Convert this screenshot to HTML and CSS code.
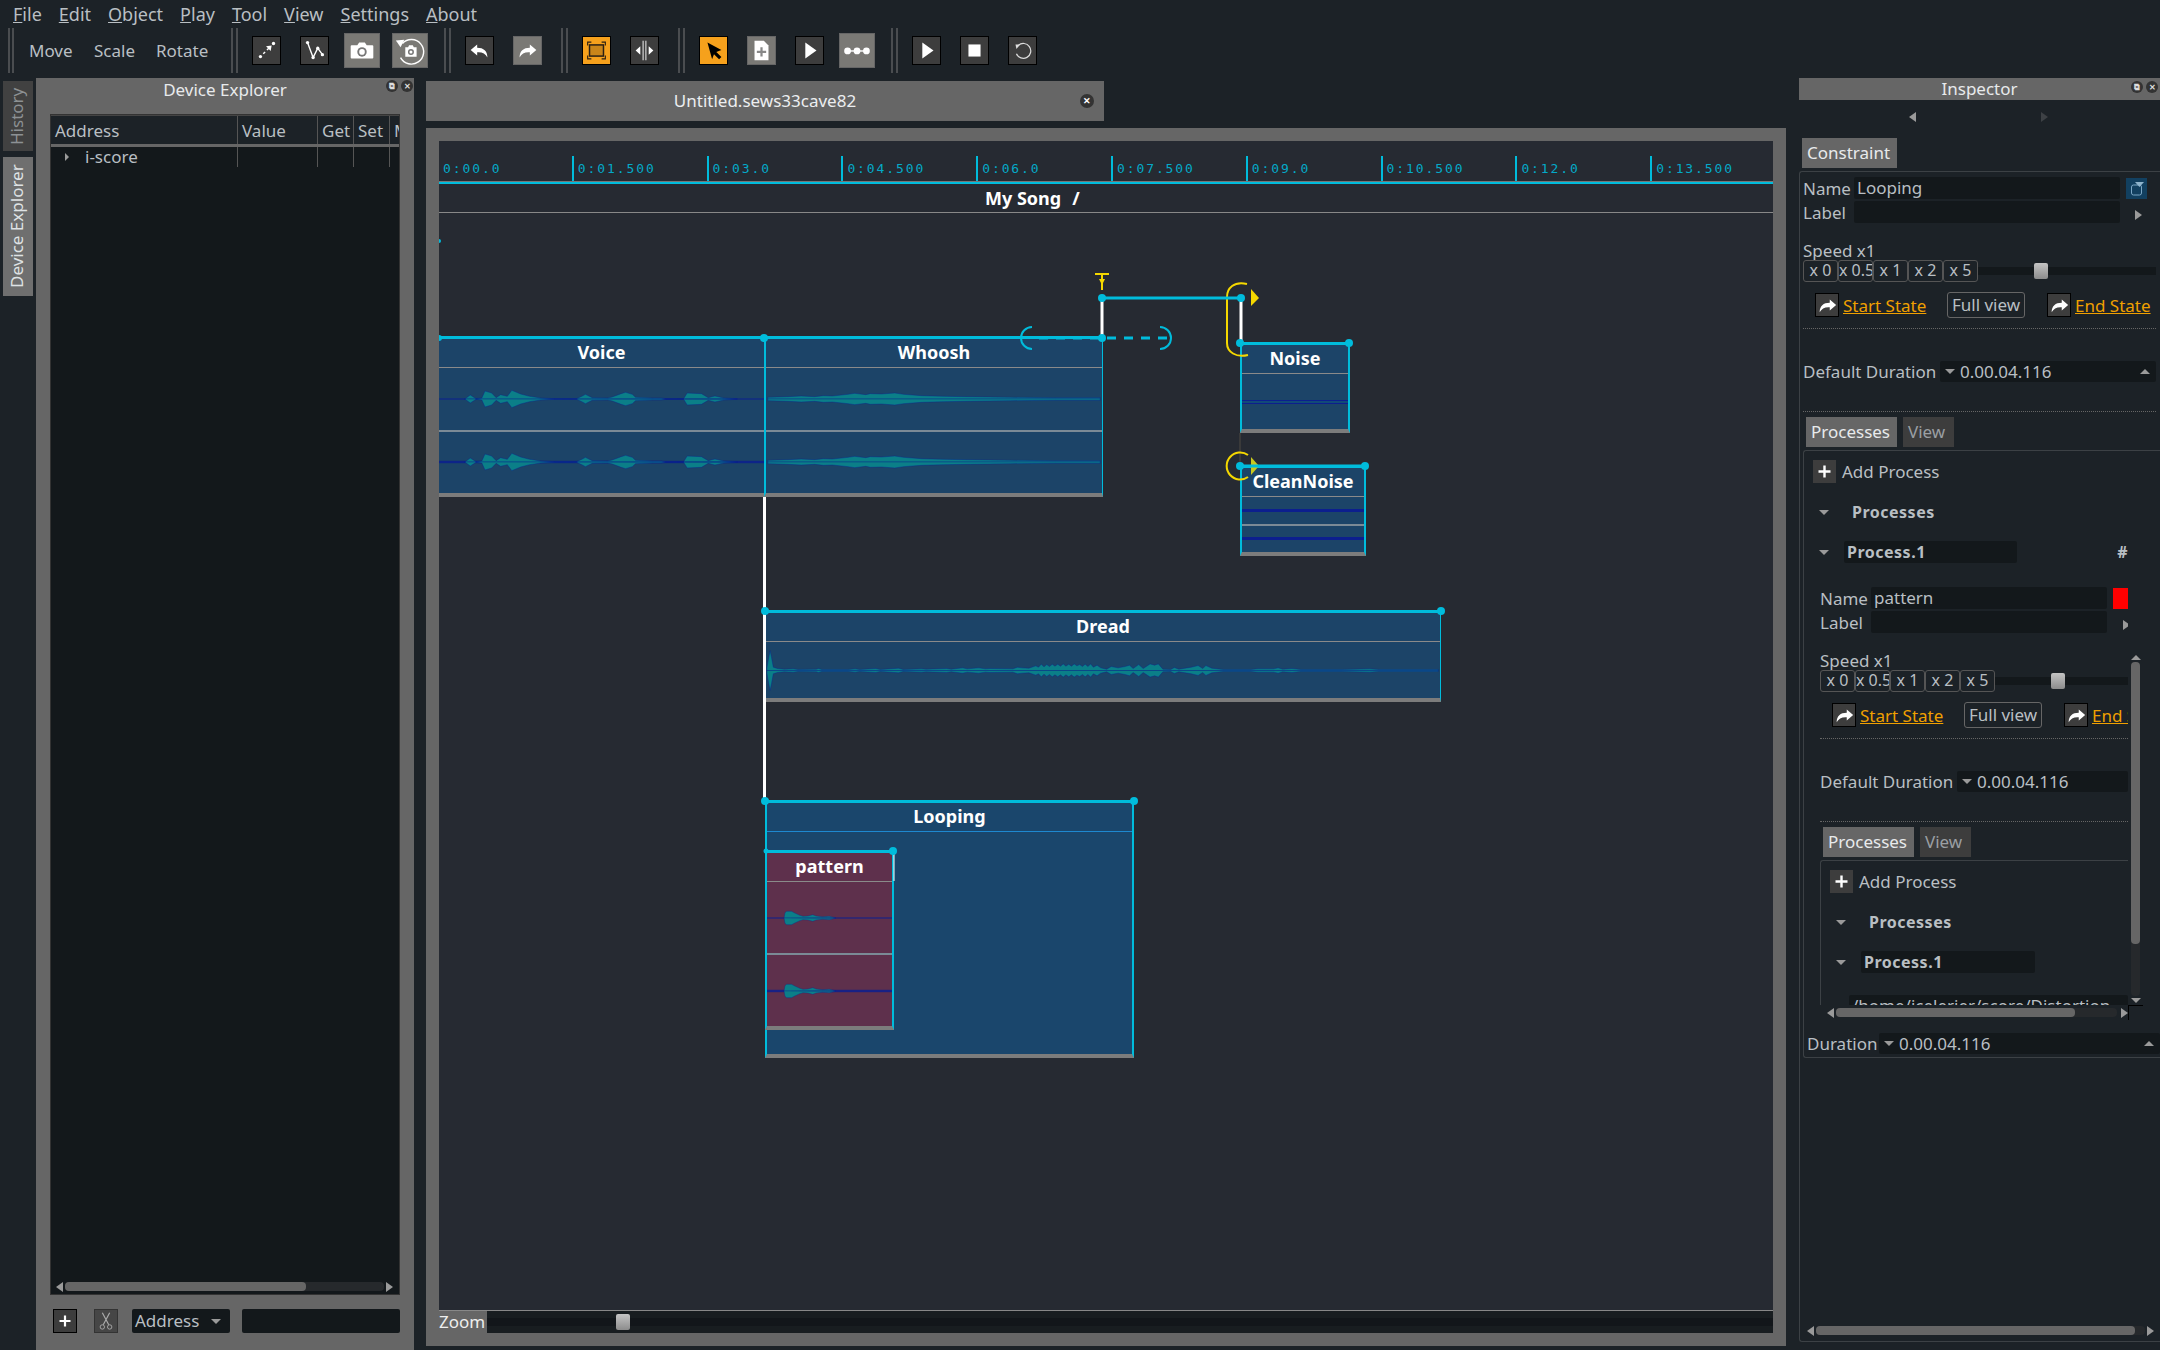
FILE: index.html
```html
<!DOCTYPE html>
<html lang="en">
<head>
    <meta charset="UTF-8">
    <title>i-score</title>
    <link rel="stylesheet" href="styles.css">
</head>
<body>
    <svg class="defs">
        <defs>
            <path id="redo" d="M17 8 L24 14 L17 20 V16.5 C12 16 8 18 6 22 C6 15 10 11.5 17 11.5 Z"/>
            <g id="wave-voice">
                <path id="wave-voice-top" d="M58 0 L70 -12 L83 -1 L96 -3 L103 -24 L118 -18 L128 -4 L138 -13 L153 -8 L163 -26 L183 -15 L203 -8 L228 -3 L258 -1 L308 -1 L320 -8 L328 -14 L343 -4 L378 -3 L388 -6 L408 -16 L418 -20 L433 -14 L440 -5 L478 -3 L498 -3 L508 -1 L548 -1 L556 -18 L588 -16 L603 -4 L618 -9 L638 -3 L668 -1 L58 0 Z"/>
                <use href="#wave-voice-top" transform="scale(1,-1)"/>
            </g>
            <g id="wave-whoosh">
                <path id="wave-whoosh-top" d="M4 -5 L49 -7 L79 -9 L109 -7 L129 -10 L149 -9 L184 -14 L199 -17 L224 -13 L234 -16 L259 -15 L289 -18 L309 -14 L349 -10 L399 -8 L449 -7 L549 -5 L649 -4 L750 -4 L750 0 L4 0 Z"/>
                <use href="#wave-whoosh-top" transform="scale(1,-1)"/>
            </g>
            <g id="wave-pattern">
                <path id="wave-pattern-top" d="M52 0 L55 -16 L60 -20 L75 -20 L85 -15 L100 -8 L110 -5 L125 -6 L140 -10 L150 -6 L170 -4 L190 -5 L210 -1 L52 0 Z"/>
                <use href="#wave-pattern-top" transform="scale(1,-1)"/>
            </g>
            <g id="wave-dread">
                <path id="wave-dread-top" d="M2 -8 L6 -40 L9 -60 L12 -40 L16 -10 L25 -6 L40 -4 L60 -5 L70 -3 L110 -4 L115 -6 L122 -3 L180 -3 L195 -5 L205 -3 L240 -6 L250 -3 L290 -7 L300 -3 L340 -5 L350 -4 L395 -6 L405 -4 L430 -8 L440 -5 L465 -8 L480 -5 L490 -6 L540 -5 L550 -10 L560 -8 L575 -7 L590 -14 L596 -10 L602 -19 L608 -11 L614 -18 L620 -12 L626 -19 L632 -13 L638 -19 L644 -13 L650 -20 L656 -13 L662 -19 L668 -13 L674 -20 L680 -14 L686 -18 L692 -12 L698 -19 L704 -12 L710 -20 L716 -10 L724 -16 L732 -8 L745 -4 L755 -12 L770 -8 L785 -12 L795 -16 L803 -6 L815 -18 L825 -6 L840 -20 L850 -16 L858 -20 L868 -4 L885 -3 L893 -9 L903 -4 L930 -10 L945 -15 L955 -6 L962 -15 L975 -7 L1000 -3 L1060 -3 L1075 -5 L1110 -5 L1120 -8 L1130 -4 L1150 -6 L1170 -3 L1260 -3 L1320 -5 L1340 -3 L1470 -3 L1470 0 L2 0 Z"/>
                <use href="#wave-dread-top" transform="scale(1,-1)"/>
            </g>
        </defs>
    </svg>

    <div class="menubar">
        <span><u>F</u>ile</span>
        <span><u>E</u>dit</span>
        <span><u>O</u>bject</span>
        <span><u>P</u>lay</span>
        <span><u>T</u>ool</span>
        <span><u>V</u>iew</span>
        <span><u>S</u>ettings</span>
        <span><u>A</u>bout</span>
    </div>

    <div class="toolbar">
        <div class="sep sep-first"></div>
        <div class="tool-text tool-move">Move</div>
        <div class="tool-text tool-scale">Scale</div>
        <div class="tool-text tool-rotate">Rotate</div>
        <div class="sep"></div>
        <div class="tool"><div class="btn"><svg viewBox="0 0 29 29"><circle cx="8" cy="21" r="1.8"/><circle cx="22" cy="7" r="1.8"/><path d="M11 18 L13 16 M15 14 L17 12" stroke="#fff" stroke-width="1.5"/><path d="M14 10 L20 9 L19 15 Z"/></svg></div></div>
        <div class="tool"><div class="btn"><svg viewBox="0 0 29 29"><polyline points="7,6 13,22 18,12 23,19" fill="none" stroke="#fff" stroke-width="1.5"/><circle cx="7" cy="6" r="1.8"/><circle cx="13" cy="22" r="1.8"/><circle cx="18" cy="12" r="1.8"/><circle cx="23" cy="19" r="1.8"/></svg></div></div>
        <div class="tool"><div class="btn btn-big"><svg viewBox="0 0 36 35"><path d="M7 12 H13 L15 9 H21 L23 12 H29 Q30 12 30 13 V25 Q30 26 29 26 H7 Q6 26 6 25 V13 Q6 12 7 12 Z"/><circle cx="18" cy="19" r="5" fill="#777"/><circle cx="18" cy="19" r="3"/></svg></div></div>
        <div class="tool"><div class="btn btn-big"><svg viewBox="0 0 36 35"><path d="M10 10 A13 13 0 1 1 8 25" fill="none" stroke="#fff" stroke-width="1.5"/><path d="M3 7 L12 6 L8 14 Z"/><path d="M13 14 H16 L17 12 H21 L22 14 H25 V24 H13 Z"/><circle cx="19" cy="19" r="3.2" fill="#777"/><circle cx="19" cy="19" r="1.6"/></svg></div></div>
        <div class="sep"></div>
        <div class="tool"><div class="btn"><svg viewBox="0 0 29 29"><use href="#redo" transform="matrix(-1 0 0 1 29 0)"/></svg></div></div>
        <div class="tool"><div class="btn btn-on"><svg viewBox="0 0 29 29"><use href="#redo"/></svg></div></div>
        <div class="sep"></div>
        <div class="tool"><div class="btn btn-orange"><svg viewBox="0 0 29 29"><rect x="7" y="8.5" width="15" height="12" fill="#c9851a" stroke="#2a2015" stroke-width="1.6"/><path d="M5 9 V5.5 H9 M20 5.5 H24 V9 M24 20 V23.5 H20 M9 23.5 H5 V20" fill="none" stroke="#2a2015" stroke-width="1.2"/></svg></div></div>
        <div class="tool"><div class="btn"><svg viewBox="0 0 29 29"><path d="M5 14.5 L10 10 V19 Z M24 14.5 L19 10 V19 Z"/><path d="M13 4 V25 M16 4 V25" stroke="#fff" stroke-width="1"/></svg></div></div>
        <div class="sep"></div>
        <div class="tool"><div class="btn btn-orange"><svg viewBox="0 0 29 29"><path d="M8 6 L23 14 L17.5 16 L23 21.5 L20.5 24 L15 18.5 L13 24 Z" fill="#000"/></svg></div></div>
        <div class="tool"><div class="btn btn-on"><svg viewBox="0 0 29 29"><path d="M7 4 H17 L22 9 V25 H7 Z"/><path d="M14.5 11 V21 M9.5 16 H19.5" stroke="#888" stroke-width="2.4"/></svg></div></div>
        <div class="tool"><div class="btn"><svg viewBox="0 0 29 29"><path d="M10 6 L22 14.5 L10 23 Z"/></svg></div></div>
        <div class="tool"><div class="btn btn-big"><svg viewBox="0 0 36 35"><path d="M6 18 H30" stroke="#fff" stroke-width="1.5"/><circle cx="8" cy="18" r="3.6"/><circle cx="18" cy="18" r="3.6"/><circle cx="28" cy="18" r="3.6"/></svg></div></div>
        <div class="sep"></div>
        <div class="tool"><div class="btn"><svg viewBox="0 0 29 29"><path d="M10 6 L22 14.5 L10 23 Z"/></svg></div></div>
        <div class="tool"><div class="btn"><svg viewBox="0 0 29 29"><rect x="8" y="8" width="13" height="13"/></svg></div></div>
        <div class="tool"><div class="btn"><svg viewBox="0 0 29 29"><path d="M10 9 A8 8 0 1 1 8 18" fill="none" stroke="#ddd" stroke-width="1.3"/><path d="M7 8 L12 8 L8 13 Z" fill="#ddd"/></svg></div></div>
    </div>

    <div class="main">
        <div class="dock-tabs">
            <div class="dock-tab">History</div>
            <div class="dock-tab dock-tab-on">Device Explorer</div>
        </div>

        <div class="device-panel">
            <div class="panel-title">Device Explorer
                <div class="win-btns"><span class="win-btn">&#10697;</span><span class="win-btn">&#10005;</span></div>
            </div>
            <div class="tree">
                <div class="tree-head">
                    <span class="col col-address">Address</span>
                    <span class="col col-value">Value</span>
                    <span class="col col-get">Get</span>
                    <span class="col col-set">Set</span>
                    <span class="col col-more">M</span>
                </div>
                <div class="tree-row">
                    <span class="col col-address"><i class="tri tri-right tri-small"></i>i-score</span>
                    <span class="col col-value"></span>
                    <span class="col col-get"></span>
                    <span class="col col-set"></span>
                </div>
                <div class="tree-fill"></div>
                <div class="hscroll hscroll-tree">
                    <i class="tri tri-left"></i>
                    <div class="hscroll-track"><div class="hscroll-thumb"></div></div>
                    <i class="tri tri-right"></i>
                </div>
            </div>
            <div class="device-bar">
                <div class="btn btn-device"><svg viewBox="0 0 24 24"><path d="M12 6 V18 M6 12 H18" stroke="#fff" stroke-width="2.4"/></svg></div>
                <div class="btn btn-device btn-cut"><svg viewBox="0 0 24 24"><path d="M8 3 L15 16 M16 3 L9 16" stroke="#aaa" stroke-width="1.3"/><circle cx="8" cy="18.5" r="2.4" fill="none" stroke="#aaa"/><circle cx="16" cy="18.5" r="2.4" fill="none" stroke="#aaa"/></svg></div>
                <div class="combo">Address<i class="tri tri-down"></i></div>
                <div class="field device-search"></div>
            </div>
        </div>

        <div class="center">
            <div class="doc-tab">Untitled.sews33cave82<span class="doc-close">&#10005;</span></div>
            <div class="canvas-wrap">
                <div class="canvas">
                    <div class="ruler">
                        <div class="tick">0:00.0</div>
                        <div class="tick">0:01.500</div>
                        <div class="tick">0:03.0</div>
                        <div class="tick">0:04.500</div>
                        <div class="tick">0:06.0</div>
                        <div class="tick">0:07.500</div>
                        <div class="tick">0:09.0</div>
                        <div class="tick">0:10.500</div>
                        <div class="tick">0:12.0</div>
                        <div class="tick">0:13.500</div>
                    </div>
                    <div class="song-title"><span>My Song</span><span>/</span></div>
                    <div class="scene">
                        <div class="box box-voice">
                            <div class="box-title">Voice</div>
                            <div class="slot"><svg class="wave" viewBox="0 -48 728 96" preserveAspectRatio="none"><line x1="0" y1="0" x2="728" y2="0"/><use href="#wave-voice"/></svg></div>
                            <div class="slot"><svg class="wave" viewBox="0 -48 728 96" preserveAspectRatio="none"><line x1="0" y1="-2" x2="728" y2="-2"/><line x1="0" y1="2" x2="728" y2="2"/><use href="#wave-voice"/></svg></div>
                        </div>
                        <div class="box box-whoosh">
                            <div class="box-title">Whoosh</div>
                            <div class="slot"><svg class="wave" viewBox="0 -48 754 96" preserveAspectRatio="none"><use href="#wave-whoosh"/></svg></div>
                            <div class="slot"><svg class="wave" viewBox="0 -48 754 96" preserveAspectRatio="none"><use href="#wave-whoosh"/></svg></div>
                        </div>
                        <div class="box box-noise">
                            <div class="box-title">Noise</div>
                            <div class="slot"><div class="flat-wave flat-wave-double"></div></div>
                        </div>
                        <div class="box box-clean">
                            <div class="box-title">CleanNoise</div>
                            <div class="slot"><div class="flat-wave"></div></div>
                            <div class="slot"><div class="flat-wave"></div></div>
                        </div>
                        <div class="box box-dread">
                            <div class="box-title">Dread</div>
                            <div class="slot"><svg class="wave wave-tall" viewBox="0 -68 1474 136" preserveAspectRatio="none"><use href="#wave-dread"/></svg></div>
                        </div>
                        <div class="box box-looping">
                            <div class="box-title box-title-blue">Looping</div>
                            <div class="box box-pattern">
                                <div class="box-title">pattern</div>
                                <div class="slot"><svg class="wave wave-short" viewBox="0 -30 382 60" preserveAspectRatio="none"><line x1="0" y1="0" x2="382" y2="0"/><use href="#wave-pattern"/></svg></div>
                                <div class="slot"><svg class="wave wave-short" viewBox="0 -30 382 60" preserveAspectRatio="none"><line x1="0" y1="-2" x2="382" y2="-2"/><line x1="0" y1="2" x2="382" y2="2"/><use href="#wave-pattern"/></svg></div>
                            </div>
                        </div>
                        <svg class="links" viewBox="440 213 1333 1097">
                            <g class="link-white">
                                <line x1="1103" y1="298" x2="1103" y2="338"/>
                                <line x1="1242" y1="298" x2="1242" y2="343"/>
                                <line x1="765.5" y1="497" x2="765.5" y2="801"/>
                                <line x1="895" y1="851" x2="895" y2="881" class="link-thin"/>
                            </g>
                            <line class="link-dim" x1="1241" y1="433" x2="1241" y2="466"/>
                            <g class="link-yellow">
                                <path d="M1096 274 H1110 M1103 274 V290"/>
                                <path d="M1248 284 C1235 281 1228 288 1228 297 V343 C1228 352 1237 358 1249 355"/>
                                <path d="M1249 455 A13.5 13.5 0 1 0 1249 477"/>
                            </g>
                            <path class="link-fill" d="M1100 279 H1106 L1103 285 Z"/>
                            <path class="link-fill" d="M1252 289 L1260 298 L1252 306 Z"/>
                            <path class="link-fill link-fill-dim" d="M1252 457 L1260 466 L1252 475 Z"/>
                            <g class="link-cyan">
                                <line x1="1103" y1="298" x2="1242" y2="298"/>
                                <line x1="1241" y1="466" x2="1366" y2="466"/>
                                <line x1="1040" y1="338" x2="1172" y2="338" class="link-dash"/>
                                <path d="M1033 327 A11 11 0 0 0 1033 349" class="link-arc"/>
                                <path d="M1161 327 A11 11 0 0 1 1161 349" class="link-arc"/>
                            </g>
                            <g class="link-nodes">
                                <circle cx="440" cy="241" r="2"/>
                                <circle cx="440" cy="338" r="3"/>
                                <circle cx="765" cy="338" r="4"/>
                                <circle cx="1103" cy="298" r="4"/>
                                <circle cx="1103" cy="338" r="4"/>
                                <circle cx="1242" cy="298" r="4"/>
                                <circle cx="1241" cy="343" r="4"/>
                                <circle cx="1350" cy="343" r="4"/>
                                <circle cx="1241" cy="466" r="4"/>
                                <circle cx="1366" cy="466" r="4"/>
                                <circle cx="766" cy="611" r="4"/>
                                <circle cx="1442" cy="611" r="4"/>
                                <circle cx="766" cy="801" r="4"/>
                                <circle cx="1135" cy="801" r="4"/>
                                <circle cx="767" cy="851" r="2.5"/>
                                <circle cx="894" cy="851" r="4"/>
                            </g>
                        </svg>
                    </div>
                    <div class="zoom-bar">
                        <span class="zoom-label">Zoom</span>
                        <div class="zoom-slider"><div class="zoom-groove"></div><div class="thumb zoom-thumb"></div></div>
                    </div>
                </div>
            </div>
        </div>

        <div class="inspector">
            <div class="inspector-title">Inspector
                <div class="win-btns"><span class="win-btn">&#10697;</span><span class="win-btn">&#10005;</span></div>
            </div>
            <div class="tab-arrows"><i class="tri tri-left"></i><i class="tri tri-right tri-dim"></i></div>
            <div class="tabs"><div class="tab tab-on tab-constraint">Constraint</div></div>
            <div class="inspector-box">
                <div class="block">
                    <div class="meta-row"><span class="meta-label">Name</span><div class="field name-field">Looping</div><div class="color-btn color-blue"><svg viewBox="0 0 21 21"><rect x="5.5" y="7" width="10" height="10" rx="2" fill="none" stroke="#7aa6c4"/><path d="M9 4 H18 L13.5 9 Z" fill="#8fb4cc"/></svg></div></div>
                    <div class="meta-row"><span class="meta-label">Label</span><div class="field name-field"></div><i class="tri tri-right meta-arrow"></i></div>
                    <div class="speed-label">Speed x1</div>
                    <div class="speed-row">
                        <div class="speed-btn">x 0</div><div class="speed-btn">x 0.5</div><div class="speed-btn">x 1</div><div class="speed-btn">x 2</div><div class="speed-btn">x 5</div>
                        <div class="groove"><div class="thumb speed-thumb"></div></div>
                    </div>
                    <div class="state-row">
                        <div class="btn btn-state"><svg viewBox="0 0 24 24"><use href="#redo" transform="translate(-2,-2)"/></svg></div>
                        <a class="state-link">Start State</a>
                        <div class="full-view">Full view</div>
                        <div class="btn btn-state btn-end"><svg viewBox="0 0 24 24"><use href="#redo" transform="translate(-2,-2)"/></svg></div>
                        <a class="state-link">End State</a>
                    </div>
                    <div class="dotted"></div>
                    <div class="duration-row"><span>Default Duration</span><div class="spin"><i class="tri tri-down"></i>0.00.04.116<i class="tri tri-up spin-up"></i></div></div>
                    <div class="dotted dotted-low"></div>
                    <div class="tabs tabs-inner"><div class="tab tab-on">Processes</div><div class="tab">View</div></div>
                </div>

                <div class="sub-box">
                    <div class="scroll-area">
                        <div class="scroll-content">
                            <div class="add-row"><div class="add-btn"><svg viewBox="0 0 23 23"><path d="M11.5 5.5 V17.5 M5.5 11.5 H17.5" stroke="#fff" stroke-width="2.4"/></svg></div>Add Process</div>
                            <div class="section-row"><i class="tri tri-down"></i><b>Processes</b></div>
                            <div class="process-row"><i class="tri tri-down"></i><div class="field process-field"><b>Process.1</b></div><b class="hash">#</b></div>

                            <div class="block block-nested">
                                <div class="meta-row"><span class="meta-label">Name</span><div class="field name-field-nested">pattern</div><div class="color-btn color-red"></div></div>
                                <div class="meta-row"><span class="meta-label">Label</span><div class="field name-field-nested"></div><i class="tri tri-right meta-arrow meta-arrow-nested"></i></div>
                                <div class="speed-label">Speed x1</div>
                                <div class="speed-row">
                                    <div class="speed-btn">x 0</div><div class="speed-btn">x 0.5</div><div class="speed-btn">x 1</div><div class="speed-btn">x 2</div><div class="speed-btn">x 5</div>
                                    <div class="groove"><div class="thumb speed-thumb"></div></div>
                                </div>
                                <div class="state-row">
                                    <div class="btn btn-state"><svg viewBox="0 0 24 24"><use href="#redo" transform="translate(-2,-2)"/></svg></div>
                                    <a class="state-link">Start State</a>
                                    <div class="full-view">Full view</div>
                                    <div class="btn btn-state btn-end"><svg viewBox="0 0 24 24"><use href="#redo" transform="translate(-2,-2)"/></svg></div>
                                    <a class="state-link">End State</a>
                                </div>
                                <div class="dotted"></div>
                                <div class="duration-row"><span>Default Duration</span><div class="spin"><i class="tri tri-down"></i>0.00.04.116</div></div>
                                <div class="dotted dotted-low"></div>
                                <div class="tabs tabs-inner"><div class="tab tab-on">Processes</div><div class="tab">View</div></div>
                            </div>

                            <div class="sub-box sub-box-nested">
                                <div class="add-row"><div class="add-btn"><svg viewBox="0 0 23 23"><path d="M11.5 5.5 V17.5 M5.5 11.5 H17.5" stroke="#fff" stroke-width="2.4"/></svg></div>Add Process</div>
                                <div class="section-row"><i class="tri tri-down"></i><b>Processes</b></div>
                                <div class="process-row"><i class="tri tri-down"></i><div class="field process-field"><b>Process.1</b></div></div>
                                <div class="field path-field">/home/jcelerier/score/Distortion</div>
                            </div>
                        </div>
                        <div class="vscroll">
                            <i class="tri tri-up"></i>
                            <div class="vscroll-track"><div class="vscroll-thumb"></div></div>
                            <i class="tri tri-down"></i>
                        </div>
                    </div>
                    <div class="hscroll hscroll-inner">
                        <i class="tri tri-left"></i>
                        <div class="hscroll-track"><div class="hscroll-thumb"></div></div>
                        <i class="tri tri-right"></i>
                        <div class="scroll-corner"></div>
                    </div>
                    <div class="duration-row duration-row-last"><span>Duration</span><div class="spin"><i class="tri tri-down"></i>0.00.04.116<i class="tri tri-up spin-up"></i></div></div>
                </div>

                <div class="hscroll hscroll-outer">
                    <i class="tri tri-left"></i>
                    <div class="hscroll-track"><div class="hscroll-thumb"></div></div>
                    <i class="tri tri-right"></i>
                </div>
            </div>
        </div>
    </div>
</body>
</html>
```
FILE: styles.css
```css
* {
    box-sizing: border-box;
}
body {
    margin: 0;
    width: 2160px;
    height: 1350px;
    overflow: hidden;
    background-color: #1c2227;
    color: #b9bfc3;
    font-family: "Noto Sans", sans-serif;
    font-size: 17px;
}
svg {
    display: block;
    fill: #fff;
}
i {
    display: block;
}
.defs {
    position: absolute;
    width: 0;
    height: 0;
}

/* menu and toolbar */
.menubar {
    height: 28px;
    padding: 1px 0 0 13px;
    display: flex;
    gap: 17px;
    font-size: 18px;
    line-height: 26px;
}
.toolbar {
    height: 45px;
    margin-bottom: 5px;
    display: flex;
    align-items: center;
}
.sep {
    width: 7px;
    height: 45px;
    margin: 0 4px 0 10px;
    border-left: 2px solid #4a4d50;
    border-right: 2px solid #4a4d50;
}
.sep-first {
    margin-left: 8px;
    margin-right: 15px;
    width: 6px;
}
.tool-text {
    font-size: 17px;
}
.tool-move {
    width: 65px;
}
.tool-scale {
    width: 62px;
}
.tool-rotate {
    width: 65px;
}
.tool {
    width: 48px;
    display: flex;
    justify-content: center;
}
.btn {
    width: 29px;
    height: 29px;
    background-color: #3d3d3d;
    border: 1px solid #000;
    flex: none;
}
.btn svg {
    width: 100%;
    height: 100%;
}
.btn-big {
    width: 36px;
    height: 35px;
    background-color: #7a7975;
    border-color: #666;
}
.btn-on {
    background-color: #7a7975;
    border-color: #666;
}
.btn-orange {
    background-color: #f6a11c;
}

/* docks */
.main {
    height: 1272px;
    display: flex;
}
.dock-tabs {
    width: 36px;
    padding: 3px 3px 0 3px;
    display: flex;
    flex-direction: column;
    gap: 6px;
}
.dock-tab {
    height: 70px;
    background-color: #414141;
    color: #8d9194;
    writing-mode: vertical-rl;
    transform: rotate(180deg);
    text-align: center;
    line-height: 28px;
    white-space: nowrap;
}
.dock-tab-on {
    height: 139px;
    background-color: #6f6f6f;
    color: #dfe2e4;
}
.device-panel {
    width: 378px;
    background-color: #666;
    padding: 0 14px;
    display: flex;
    flex-direction: column;
}
.panel-title {
    position: relative;
    height: 36px;
    text-align: center;
    line-height: 24px;
    color: #e8eaec;
}
.win-btns {
    position: absolute;
    right: 1px;
    top: 2px;
    display: flex;
    gap: 3px;
}
.panel-title .win-btns {
    right: -13px;
}
.win-btn {
    width: 12px;
    height: 12px;
    border-radius: 50%;
    background-color: #333;
    color: #ddd;
    font-size: 8px;
    line-height: 12px;
    text-align: center;
    font-weight: bold;
}
.tree {
    flex: 1;
    background-color: #13181b;
    border: 1px solid #333;
    display: flex;
    flex-direction: column;
    overflow: hidden;
}
.tree-head {
    height: 32px;
    background-color: #1c2227;
    border-bottom: 3px solid #666;
    display: flex;
    line-height: 30px;
    border-top: 1px solid #444;
}
.tree-row {
    height: 20px;
    display: flex;
    line-height: 20px;
}
.col {
    display: block;
    overflow: hidden;
    border-right: 1px solid #555;
    padding-left: 4px;
    white-space: nowrap;
}
.col-address {
    width: 187px;
}
.col-value {
    width: 80px;
}
.col-get {
    width: 36px;
}
.col-set {
    width: 36px;
}
.col-more {
    width: 9px;
    border-right: none;
}
.tree-row .col-address {
    position: relative;
    padding-left: 34px;
}
.tree-row .tri {
    position: absolute;
    left: 14px;
    top: 6px;
}
.tree-fill {
    flex: 1;
}
.device-bar {
    height: 55px;
    padding: 14px 0 0 3px;
    display: flex;
    align-items: flex-start;
}
.btn-device {
    width: 24px;
    height: 24px;
    margin-right: 17px;
}
.btn-cut {
    background-color: #464646;
    border-color: #333;
    margin-right: 14px;
}
.combo {
    width: 98px;
    height: 24px;
    background-color: #13181b;
    border-radius: 2px;
    padding-left: 3px;
    line-height: 24px;
    display: flex;
    align-items: center;
    gap: 12px;
}
.device-search {
    width: 158px;
    height: 24px;
    margin-left: 12px;
}
.field {
    background-color: #13181b;
    border-radius: 2px;
    line-height: 22px;
    padding-left: 3px;
    overflow: hidden;
    white-space: nowrap;
}

/* triangles */
.tri {
    width: 0;
    height: 0;
    flex: none;
    border-style: solid;
    border-color: transparent;
}
.tri-left {
    border-width: 5px 7px 5px 0;
    border-right-color: #9a9a9a;
}
.tri-right {
    border-width: 5px 0 5px 7px;
    border-left-color: #9a9a9a;
}
.tri-small {
    border-width: 4px 0 4px 4px;
}
.tri-dim {
    border-left-color: #3d4145;
}
.tri-down {
    border-width: 5px 5px 0 5px;
    border-top-color: #9a9a9a;
}
.tri-up {
    border-width: 0 5px 5px 5px;
    border-bottom-color: #9a9a9a;
}

/* scrollbars */
.hscroll {
    height: 9px;
    display: flex;
    align-items: center;
    gap: 2px;
}
.hscroll-track {
    flex: 1;
    height: 9px;
    background-color: #26292c;
    border-radius: 4px;
}
.hscroll-thumb {
    height: 9px;
    background-color: #666;
    border-radius: 4px;
}
.hscroll-tree {
    margin: 0 6px 3px 5px;
}
.hscroll-tree .hscroll-thumb {
    width: 241px;
}
.hscroll-inner {
    position: relative;
    height: 28px;
    padding: 3px 0 0 23px;
    width: 324px;
    align-items: flex-start;
}
.hscroll-inner .tri {
    margin-top: 0;
}
.hscroll-inner .hscroll-thumb {
    width: 239px;
}
.hscroll-inner .hscroll-track {
    margin-right: 2px;
    flex: 1;
}
.scroll-corner {
    position: absolute;
    left: 324px;
    top: 0;
    width: 15px;
    height: 15px;
    border-left: 1px solid #000;
    border-top: 1px solid #000;
}
.hscroll-outer {
    margin: auto 6px 6px 7px;
}
.hscroll-outer .hscroll-thumb {
    width: 319px;
}

/* center */
.center {
    width: 1360px;
    margin: 0 13px 0 12px;
    display: flex;
    flex-direction: column;
}
.doc-tab {
    position: relative;
    width: 678px;
    height: 40px;
    margin-top: 3px;
    background-color: #666;
    color: #eceef0;
    text-align: center;
    line-height: 40px;
    flex: none;
}
.doc-close {
    position: absolute;
    right: 10px;
    top: 13px;
    width: 14px;
    height: 14px;
    border-radius: 50%;
    background-color: #333;
    color: #fff;
    font-size: 9px;
    line-height: 14px;
    font-weight: bold;
}
.canvas-wrap {
    height: 1218px;
    margin-top: 7px;
    background-color: #666;
    padding: 13px;
}
.canvas {
    height: 100%;
    background-color: #262a32;
    display: flex;
    flex-direction: column;
    overflow: hidden;
}
.ruler {
    height: 43px;
    flex: none;
    padding-top: 15px;
    margin-left: -2px;
    display: flex;
    border-bottom: 2px solid #00bcdc;
    box-shadow: inset 0 -1px 0 #777;
}
.tick {
    width: 134.8px;
    height: 25px;
    flex: none;
    border-left: 2px solid #00bcdc;
    padding: 4px 0 0 4px;
    color: #04a9c8;
    font-family: "DejaVu Sans Mono", monospace;
    font-size: 13px;
    letter-spacing: 1.9px;
    line-height: 18px;
    white-space: nowrap;
}
.song-title {
    height: 29px;
    flex: none;
    padding-left: 546px;
    display: flex;
    gap: 11px;
    color: #fff;
    font-weight: bold;
    font-size: 18px;
    line-height: 28px;
    border-bottom: 1px solid #888;
}
.scene {
    position: relative;
    flex: 1;
}
.zoom-bar {
    height: 23px;
    flex: none;
    border-top: 1px solid #888;
    display: flex;
    background-color: #666;
    color: #eee;
    line-height: 22px;
}
.zoom-label {
    width: 48px;
    overflow: hidden;
}
.zoom-slider {
    position: relative;
    flex: 1;
    background-color: #181d20;
}
.zoom-groove {
    height: 8px;
    margin-top: 7px;
    background-color: #12161a;
}
.zoom-thumb {
    position: absolute;
    left: 129px;
    top: 3px;
}
.thumb {
    width: 14px;
    height: 16px;
    border-radius: 2px;
    background: linear-gradient(#c4c4c4, #8c8c8c);
}

/* boxes on the scenario */
.box {
    position: absolute;
    display: flex;
    flex-direction: column;
    background-color: #1c4468;
    border-top: 3px solid #00bcdc;
    border-left: 2px solid #00bcdc;
    border-right: 2px solid #00bcdc;
    border-bottom: 4px solid #7c7c7c;
}
.box-title {
    height: 29px;
    flex: none;
    text-align: center;
    color: #fff;
    font-weight: bold;
    font-size: 18px;
    line-height: 27px;
    border-bottom: 1px solid #8a8a8a;
}
.box-title-blue {
    border-bottom-color: #1e88d0;
}
.slot {
    flex: 1;
    min-height: 0;
    display: flex;
    align-items: center;
    border-top: 2px solid #7b8a96;
}
.box-title + .slot {
    border-top: none;
}
.wave {
    width: 100%;
    height: 32px;
    overflow: visible;
    fill: #0b7f88;
    stroke: #0b1f90;
}
.wave * {
    vector-effect: non-scaling-stroke;
}
.wave-tall {
    height: 45px;
}
.wave-short {
    height: 20px;
}
.flat-wave {
    width: 100%;
    height: 3px;
    background-color: #0c1f8e;
}
.flat-wave-double {
    height: 4px;
    background-color: #124a78;
    border-top: 1px solid #0c1f8e;
    border-bottom: 1px solid #0c1f8e;
}
.box-voice {
    left: 0;
    top: 123px;
    width: 325px;
    height: 161px;
    border-left: none;
    border-right: none;
}
.box-whoosh {
    left: 325px;
    top: 123px;
    width: 339px;
    height: 161px;
    border-right-width: 1px;
}
.box-noise {
    left: 801px;
    top: 129px;
    width: 110px;
    height: 91px;
}
.box-clean {
    left: 801px;
    top: 252px;
    width: 126px;
    height: 91px;
}
.box-dread {
    left: 326px;
    top: 397px;
    width: 676px;
    height: 92px;
    border-left-width: 1px;
    border-right-width: 1px;
}
.box-looping {
    left: 326px;
    top: 587px;
    width: 369px;
    height: 258px;
    background-color: #1a466c;
}
.box-pattern {
    left: -2px;
    top: 47px;
    width: 129px;
    height: 180px;
    background-color: #5e304c;
}

.links {
    position: absolute;
    left: 0;
    top: 0;
    width: 1333px;
    height: 1097px;
    fill: none;
}
.link-white line {
    stroke: #fff;
    stroke-width: 3;
}
.link-white .link-thin {
    stroke-width: 1;
}
.link-dim {
    stroke: #3a3a3a;
    stroke-width: 2;
}
.link-yellow path {
    stroke: #f5d800;
    stroke-width: 2;
    fill: none;
}
.link-fill {
    fill: #f5d800;
}
.link-fill-dim {
    fill: #c8c820;
}
.link-cyan line {
    stroke: #00bcdc;
    stroke-width: 3;
}
.link-cyan .link-dash {
    stroke-dasharray: 9 8;
}
.link-cyan .link-arc {
    stroke: #00bcdc;
    stroke-width: 2;
    fill: none;
}
.link-nodes {
    fill: #00bcdc;
}

/* inspector */
.inspector {
    width: 361px;
    display: flex;
    flex-direction: column;
}
.inspector-title {
    position: relative;
    height: 22px;
    flex: none;
    background-color: #666;
    text-align: center;
    line-height: 22px;
    color: #e8eaec;
}
.inspector-title .win-btns {
    right: 2px;
    top: 3px;
}
.inspector-title .win-btn {
    line-height: 12px;
}
.tab-arrows {
    height: 38px;
    flex: none;
    padding: 12px 0 0 110px;
    display: flex;
    gap: 125px;
}
.tabs {
    display: flex;
    gap: 6px;
    flex: none;
}
.tab {
    height: 30px;
    padding: 0 5px;
    background-color: #3d3d3d;
    color: #9a9fa3;
    line-height: 29px;
}
.tab-on {
    background-color: #666;
    color: #e8eaec;
}
.tab-constraint {
    width: 95px;
    margin-left: 3px;
}
.tabs-inner {
    margin: 5px 0 0 3px;
}
.tabs-inner .tab:first-child {
    width: 91px;
}
.tabs-inner .tab:last-child {
    width: 51px;
}
.inspector-box {
    flex: none;
    height: 1171px;
    margin-top: 3px;
    border: 1px solid #3c4145;
    border-right: none;
    border-radius: 3px 0 0 3px;
    padding-top: 5px;
    display: flex;
    flex-direction: column;
}
.block {
    padding: 0 4px 0 3px;
    flex: none;
}
.block-nested {
    padding: 0;
    margin: 24px 0 0 16px;
    width: 308px;
    overflow: hidden;
}
.meta-row {
    height: 22px;
    margin-bottom: 2px;
    display: flex;
    align-items: center;
}
.meta-label {
    width: 51px;
    flex: none;
}
.name-field {
    width: 266px;
    height: 22px;
    flex: none;
}
.name-field-nested {
    width: 236px;
    height: 22px;
    flex: none;
}
.color-btn {
    width: 21px;
    height: 21px;
    margin-left: 6px;
    flex: none;
}
.color-blue {
    background-color: #124060;
}
.color-red {
    background-color: #f00;
}
.meta-arrow {
    margin: 6px 0 0 15px;
}
.meta-arrow-nested {
    margin-left: 16px;
}
.speed-label {
    margin-top: 20px;
    height: 17px;
    line-height: 16px;
}
.speed-row {
    height: 22px;
    display: flex;
    align-items: center;
}
.speed-btn {
    width: 35px;
    height: 22px;
    flex: none;
    border: 1px solid #555;
    border-radius: 3px;
    text-align: center;
    font-size: 16px;
    line-height: 19px;
    white-space: nowrap;
    overflow: hidden;
}
.groove {
    position: relative;
    flex: 1;
    height: 8px;
    background-color: #13181b;
}
.speed-thumb {
    position: absolute;
    left: 56px;
    top: -4px;
}
.state-row {
    height: 26px;
    margin-top: 10px;
    padding-left: 12px;
    display: flex;
    align-items: center;
    white-space: nowrap;
}
.btn-state {
    width: 24px;
    height: 24px;
}
.btn-end {
    margin-left: 22px;
}
.state-link {
    width: 87px;
    flex: none;
    margin-left: 4px;
    color: #f0a000;
    text-decoration: underline;
}
.state-link:last-child {
    width: auto;
}
.full-view {
    width: 78px;
    height: 26px;
    margin-left: 17px;
    flex: none;
    border: 1px solid #666;
    border-radius: 3px;
    text-align: center;
    line-height: 23px;
}
.dotted {
    margin-top: 10px;
    border-top: 1px dotted #666;
}
.dotted-low {
    margin-top: 29px;
}
.duration-row {
    margin-top: 32px;
    height: 21px;
    display: flex;
    align-items: center;
    white-space: nowrap;
}
.duration-row span {
    width: 137px;
    flex: none;
}
.spin {
    flex: 1;
    height: 21px;
    background-color: #13181b;
    border-radius: 2px;
    display: flex;
    align-items: center;
    gap: 5px;
    padding: 0 6px 0 5px;
}
.spin-up {
    margin-left: auto;
}
.sub-box {
    margin: 3px 0 0 3px;
    border: 1px solid #3c4145;
    border-right: none;
    border-radius: 3px 0 0 3px;
    flex: none;
}
.sub-box-nested {
    margin: 3px 0 0 16px;
    width: 308px;
    padding-top: 9px;
    border-bottom: none;
}
.scroll-area {
    height: 554px;
    display: flex;
}
.scroll-content {
    width: 324px;
    flex: none;
    padding-top: 9px;
    overflow: hidden;
}
.vscroll {
    width: 9px;
    margin: 204px 0 0 3px;
    height: 348px;
    display: flex;
    flex-direction: column;
    align-items: center;
    gap: 2px;
}
.vscroll-track {
    flex: 1;
    width: 9px;
    background-color: #26292c;
    border-radius: 4px;
}
.vscroll-thumb {
    height: 282px;
    background-color: #666;
    border-radius: 4px;
}
.add-row {
    height: 23px;
    padding-left: 9px;
    display: flex;
    align-items: center;
    gap: 6px;
}
.add-btn {
    width: 23px;
    height: 23px;
    background-color: #3d3d3d;
}
.section-row {
    margin-top: 19px;
    height: 20px;
    padding-left: 15px;
    display: flex;
    align-items: center;
    gap: 23px;
}
.process-row {
    margin-top: 19px;
    height: 22px;
    padding-left: 15px;
    display: flex;
    align-items: center;
    gap: 15px;
}
.section-row b,
.process-row b {
    font-size: 16px;
    letter-spacing: 0.5px;
}
.process-field {
    width: 174px;
    height: 22px;
    padding-left: 3px;
}
.hash {
    margin-left: 85px;
    font-size: 18px;
}
.path-field {
    height: 30px;
    margin: 22px 0 0 28px;
}
.duration-row-last {
    margin: 0 0 3px 3px;
}
.duration-row-last span {
    width: 72px;
}
```
